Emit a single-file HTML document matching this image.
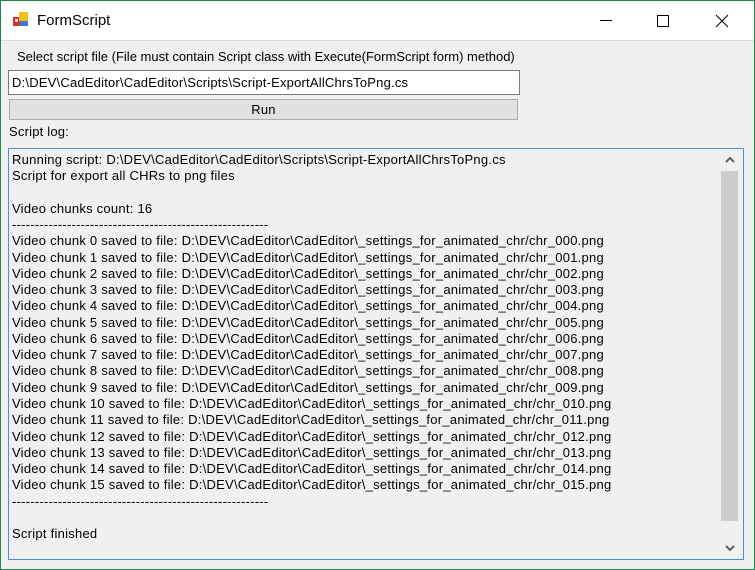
<!DOCTYPE html>
<html><head><style>
body{margin:0;width:755px;height:570px;overflow:hidden;font-family:"Liberation Sans",sans-serif;font-size:13px;letter-spacing:0.2px;color:#000;}
.win{position:absolute;left:0;top:0;border:1px solid #1e8a4a;background:#f0f0f0;box-sizing:border-box;width:755px;height:570px}
.title{position:absolute;left:0;top:0;width:753px;height:39px;background:#fff;border-bottom:1px solid #dadada}
.abs{position:absolute;white-space:pre}
.log{position:absolute;left:7px;top:147px;width:736px;height:412px;border:1px solid #4a90d9;box-sizing:border-box;background:#f0f0f0}
.lines{position:absolute;left:3px;top:3px;line-height:16.27px;letter-spacing:0.25px}
.sb{position:absolute;right:3px;top:1px;width:20px;bottom:1px;background:#f0f0f0}
.thumb{position:absolute;left:1px;width:17px;top:21px;height:350px;background:#cdcdcd}
</style></head><body>
<div class="win">
<div class="title">
<svg class="abs" style="left:12px;top:10px" width="16" height="16"><rect x="0" y="6" width="7" height="9" fill="#c33"/><rect x="2" y="8" width="3" height="3" fill="#fcc"/><rect x="6" y="1" width="9" height="9" fill="#f2c018"/><rect x="7" y="10" width="8" height="5" fill="#3b7bd0"/></svg>
<div class="abs" style="left:36px;top:11px;font-size:15px;letter-spacing:0">FormScript</div>
<svg class="abs" style="left:598px;top:13px" width="130" height="14"><line x1="1" y1="6.5" x2="13" y2="6.5" stroke="#000"/><rect x="58.5" y="1.5" width="11" height="11" fill="none" stroke="#000"/><path d="M117 1L129 13M129 1L117 13" stroke="#000"/></svg>
</div>
<div class="abs" style="left:16px;top:48px;letter-spacing:0">Select script file (File must contain Script class with Execute(FormScript form) method)</div>
<div class="abs" style="left:7px;top:69px;width:512px;height:25px;background:#fff;border:1px solid #7a7a7a;box-sizing:border-box;padding:4px 3px">D:\DEV\CadEditor\CadEditor\Scripts\Script-ExportAllChrsToPng.cs</div>
<div class="abs" style="left:8px;top:98px;width:509px;height:21px;background:#e1e1e1;border:1px solid #adadad;box-sizing:border-box;text-align:center;line-height:19px">Run</div>
<div class="abs" style="left:8px;top:123px">Script log:</div>
<div class="log">
<div class="lines abs">Running script: D:\DEV\CadEditor\CadEditor\Scripts\Script-ExportAllChrsToPng.cs
Script for export all CHRs to png files

Video chunks count: 16
--------------------------------------------------------
Video chunk 0 saved to file: D:\DEV\CadEditor\CadEditor\_settings_for_animated_chr/chr_000.png
Video chunk 1 saved to file: D:\DEV\CadEditor\CadEditor\_settings_for_animated_chr/chr_001.png
Video chunk 2 saved to file: D:\DEV\CadEditor\CadEditor\_settings_for_animated_chr/chr_002.png
Video chunk 3 saved to file: D:\DEV\CadEditor\CadEditor\_settings_for_animated_chr/chr_003.png
Video chunk 4 saved to file: D:\DEV\CadEditor\CadEditor\_settings_for_animated_chr/chr_004.png
Video chunk 5 saved to file: D:\DEV\CadEditor\CadEditor\_settings_for_animated_chr/chr_005.png
Video chunk 6 saved to file: D:\DEV\CadEditor\CadEditor\_settings_for_animated_chr/chr_006.png
Video chunk 7 saved to file: D:\DEV\CadEditor\CadEditor\_settings_for_animated_chr/chr_007.png
Video chunk 8 saved to file: D:\DEV\CadEditor\CadEditor\_settings_for_animated_chr/chr_008.png
Video chunk 9 saved to file: D:\DEV\CadEditor\CadEditor\_settings_for_animated_chr/chr_009.png
Video chunk 10 saved to file: D:\DEV\CadEditor\CadEditor\_settings_for_animated_chr/chr_010.png
Video chunk 11 saved to file: D:\DEV\CadEditor\CadEditor\_settings_for_animated_chr/chr_011.png
Video chunk 12 saved to file: D:\DEV\CadEditor\CadEditor\_settings_for_animated_chr/chr_012.png
Video chunk 13 saved to file: D:\DEV\CadEditor\CadEditor\_settings_for_animated_chr/chr_013.png
Video chunk 14 saved to file: D:\DEV\CadEditor\CadEditor\_settings_for_animated_chr/chr_014.png
Video chunk 15 saved to file: D:\DEV\CadEditor\CadEditor\_settings_for_animated_chr/chr_015.png
--------------------------------------------------------

Script finished</div>
<div class="sb"><svg class="abs" style="left:5px;top:6px" width="10" height="8"><path d="M1 6L5 2L9 6" stroke="#606060" stroke-width="2" fill="none"/></svg><div class="thumb"></div><svg class="abs" style="left:5px;bottom:6px" width="10" height="8"><path d="M1 2L5 6L9 2" stroke="#606060" stroke-width="2" fill="none"/></svg></div>
</div>
</div>
</body></html>
